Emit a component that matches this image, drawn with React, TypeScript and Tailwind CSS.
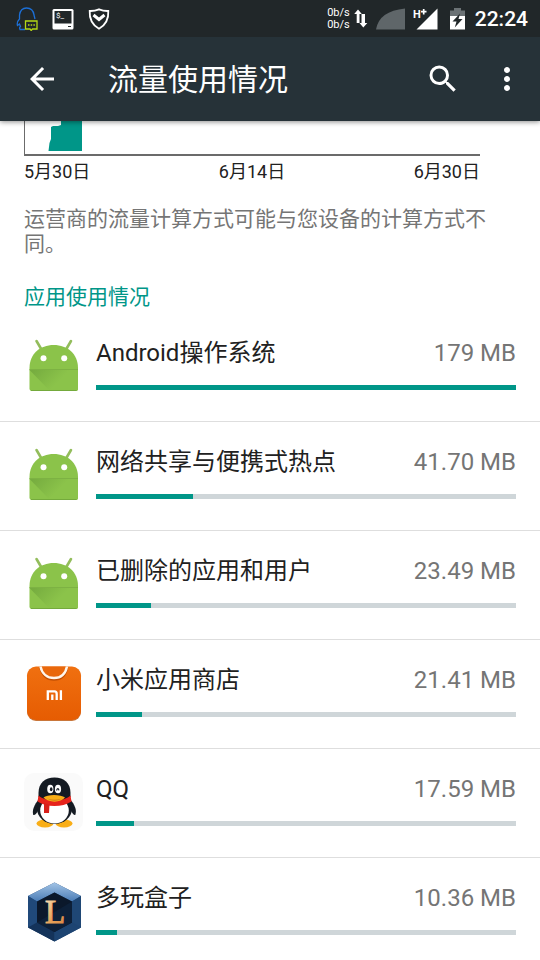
import { MdArrowBack, MdMoreVert, MdSearch } from 'react-icons/md'

interface AppUsage {
    name: string
    usage: string
    percent: number
    icon: () => React.JSX.Element
}

function AndroidIcon() {
    return (
        <svg viewBox="0 0 60 60" className="w-15 h-15" aria-hidden="true">
            <defs>
                <linearGradient id="android-shade" x1="0" y1="0" x2="0.7" y2="0.3">
                    <stop offset="0" stopColor="#74aa3e" />
                    <stop offset="1" stopColor="#8bc34a" />
                </linearGradient>
            </defs>
            <path d="M12.500 4 L17.500 12.500 M47 4 L42 12.500" stroke="#93bd5c" strokeWidth="2.600" strokeLinecap="round" />
            <path d="M5.500 33 V31 C5.500 17 16 8 29.700 8 C43.500 8 54 17 54 31 V33 Z" fill="#8bc34a" />
            <path d="M5.500 33 H54 V51.500 Q54 54 51.500 54 H8 Q5.500 54 5.500 51.500 Z" fill="#8bc34a" />
            <path d="M5.500 33 H54 V51.500 Q54 54 51.500 54 H26 Z" fill="url(#android-shade)" />
            <path d="M5.500 32.500 H54" stroke="#7db243" strokeWidth="1" />
            <path d="M7 53.500 H52.500" stroke="#74aa3c" strokeWidth="1" />
            <circle cx="19.500" cy="21.300" r="3" fill="#fff" />
            <circle cx="40.200" cy="21.300" r="3" fill="#fff" />
        </svg>
    )
}

function MiStoreIcon() {
    return (
        <svg viewBox="0 0 60 60" className="w-15 h-15" aria-hidden="true">
            <defs>
                <linearGradient id="mi-bag" x1="0" y1="0" x2="0" y2="1">
                    <stop offset="0" stopColor="#f07010" />
                    <stop offset="1" stopColor="#e65c02" />
                </linearGradient>
            </defs>
            <rect x="3" y="3.500" width="54" height="53.500" rx="9" fill="#c9763a" />
            <rect x="3" y="2.500" width="54" height="53.500" rx="9" fill="url(#mi-bag)" />
            <path d="M16.500 3.500 C18.500 11.500 23.500 15.500 30 15.500 C36.500 15.500 41.500 11.500 43 3.500" fill="none" stroke="#c24f04" strokeWidth="2.600" />
            <path d="M16.500 2.500 C18 10 23.500 14 30 14 C36.500 14 41.500 10 43 2.500" fill="#e9680c" stroke="#fff6ec" strokeWidth="2.400" />
            <path d="M23.800 36 V27.400 H30.500 Q32.700 27.400 32.700 30 V36 M28.300 30.500 V36 M36.900 26.300 V36" fill="none" stroke="#fff" strokeWidth="2.300" />
        </svg>
    )
}

function QQIcon() {
    return (
        <svg viewBox="0 0 60 60" className="w-15 h-15" aria-hidden="true">
            <rect x="0" y="0" width="59" height="58" rx="10" fill="#fafafa" />
            <ellipse cx="21" cy="50.500" rx="8.500" ry="4" fill="#f9ae17" />
            <ellipse cx="40" cy="50.500" rx="8.500" ry="4" fill="#f9ae17" />
            <path d="M15 26 C10 32 8 37 9.200 42 C11 42.500 13 40 15 36 Z" fill="#141a22" />
            <path d="M46 26 C51 32 53 37 51.300 42 C50 42.500 48 40 46 36 Z" fill="#141a22" />
            <ellipse cx="30.500" cy="35.500" rx="17.500" ry="15.500" fill="#141a22" />
            <ellipse cx="30.500" cy="37.500" rx="14.300" ry="13" fill="#fff" />
            <path d="M14.500 24 V20 C14.500 10 21 4.500 30.500 4.500 C40 4.500 46.500 10 46.500 20 V24 C42 30 19 30 14.500 24 Z" fill="#141a22" />
            <path d="M14.500 22.500 C22 29 39 29 46.500 22.500 L47.500 28.500 C38 34.500 23 34.500 13.500 28.500 Z" fill="#e6231c" />
            <path d="M20 30 L25.500 31.500 L25 40 H20 Z" fill="#d8201b" />
            <ellipse cx="26.300" cy="16" rx="3.100" ry="4.300" fill="#fff" />
            <ellipse cx="34" cy="16" rx="3.100" ry="4.300" fill="#fff" />
            <ellipse cx="27.200" cy="16.200" rx="1.300" ry="2" fill="#141a22" />
            <path d="M32.500 17.400 Q34 13.700 35 17.400" fill="none" stroke="#141a22" strokeWidth="1.200" />
            <path d="M19.500 24.500 C23 21 37 21 41 24.500 C37 30 24 30 19.500 24.500 Z" fill="#f9ae17" />
            <path d="M23 25.500 Q30.500 28 38 25.500 Q30.500 30 23 25.500 Z" fill="#c8791a" />
        </svg>
    )
}

function DuowanIcon() {
    return (
        <svg viewBox="0 0 60 60" className="w-15 h-15" aria-hidden="true">
            <defs>
                <linearGradient id="box-top" x1="0" y1="0" x2="0" y2="1">
                    <stop offset="0" stopColor="#a3c4e6" />
                    <stop offset="1" stopColor="#4a7cb6" />
                </linearGradient>
                <linearGradient id="box-letter" x1="0" y1="0" x2="1" y2="1">
                    <stop offset="0" stopColor="#fff0cf" />
                    <stop offset="0.500" stopColor="#e8a45a" />
                    <stop offset="1" stopColor="#d98443" />
                </linearGradient>
            </defs>
            <path d="M30.500 0.500 L57 14 V45.500 L30.500 59.500 L4 45.500 V14 Z" fill="#1f4673" />
            <path d="M4 14 L30.500 0.500 L57 14 L48 19.500 L30.500 10.500 L13 19.500 Z" fill="url(#box-top)" />
            <path d="M57 14 L48 19.500 V40.500 L57 45.500 Z" fill="#1f4775" />
            <path d="M4 14 L13 19.500 V40.500 L4 45.500 Z" fill="#20497a" />
            <path d="M4 45.500 L13 40.500 L30.500 50 V59.500 Z" fill="#14335a" />
            <path d="M57 45.500 L48 40.500 L30.500 50 V59.500 Z" fill="#1d4472" />
            <path d="M30.500 10.500 L48 19.500 V40.500 L30.500 50 L13 40.500 V19.500 Z" fill="#0b182b" />
            <path d="M48 19.500 V40.500 L30.500 50 L13 40.500 Z" fill="#0d2039" />
            <text x="21" y="40.500" fontSize="33" fill="url(#box-letter)" stroke="url(#box-letter)" strokeWidth="1" className="font-['Liberation_Serif',serif]">L</text>
        </svg>
    )
}

const apps: AppUsage[] = [
    { name: 'Android操作系统', usage: '179 MB', percent: 100, icon: AndroidIcon },
    { name: '网络共享与便携式热点', usage: '41.70 MB', percent: 23, icon: AndroidIcon },
    { name: '已删除的应用和用户', usage: '23.49 MB', percent: 13, icon: AndroidIcon },
    { name: '小米应用商店', usage: '21.41 MB', percent: 11, icon: MiStoreIcon },
    { name: 'QQ', usage: '17.59 MB', percent: 9, icon: QQIcon },
    { name: '多玩盒子', usage: '10.36 MB', percent: 5, icon: DuowanIcon },
]

function StatusBar() {
    return (
        <div className="flex items-center justify-between h-[37px] pl-4 pr-3 bg-[#212729] text-white">
            <div className="flex items-center gap-3.5">
                <svg viewBox="0 0 22 24" className="w-[22px] h-6" fill="none" aria-hidden="true">
                    <path d="M9 22.500 H4 Q3 20.500 4.500 19.500 L3.500 17 L1.500 18.500 Q0.500 15 3.500 12 V8 Q4.500 1 10.500 1 Q17 1 18 8 L19 12" stroke="#1c6fd6" strokeWidth="1.300" />
                    <path d="M9.500 14 H21 V22 H16.500 L15.200 23.500 L14 22 H9.500 Z" stroke="#b5d916" strokeWidth="1.300" />
                    <path d="M12 18 H13.500 M14.700 18 H16.200 M17.400 18 H18.900" stroke="#b5d916" strokeWidth="1.500" />
                </svg>
                <svg viewBox="0 0 22 22" className="w-[22px] h-[22px]" aria-hidden="true">
                    <rect x="0.500" y="1" width="21" height="20.500" rx="1.500" fill="#fff" />
                    <rect x="2.500" y="3" width="17" height="12.500" fill="#212729" />
                    <text x="4" y="9.500" fontSize="8" fill="#fff" className="font-['Roboto',sans-serif]">$_</text>
                    <path d="M16 18.500 H19" stroke="#212729" strokeWidth="1" />
                </svg>
                <svg viewBox="0 0 22 22" className="w-[22px] h-[22px]" fill="none" stroke="#fff" aria-hidden="true">
                    <path d="M11 1.300 Q15.500 3.200 20.300 3 Q21 15 11 20.800 Q1 15 1.700 3 Q6.500 3.200 11 1.300 Z" strokeWidth="1.800" />
                    <path d="M5.500 7 L11 11.500 L16.500 7" strokeWidth="3" />
                </svg>
            </div>
            <div className="flex items-center">
                <div className="pt-px text-[11px] leading-3 mr-1">
                    <div>0b/s</div>
                    <div>0b/s</div>
                </div>
                <svg viewBox="0 0 14 20" className="w-3.5 h-5 mr-2" aria-hidden="true">
                    <path d="M4 0.500 L7.800 5 H5.500 V14 H2.700 V5 H0.200 Z M9.300 18.500 L5.500 14 H7.500 V5 H11 V14 H13.300 Z" fill="#fff" />
                </svg>
                <svg viewBox="0 0 29 22" className="w-[29px] h-[22px] mr-2" aria-hidden="true">
                    <path d="M0 21.500 Q3 3 29 0.500 V21.500 Z" fill="#5f6669" />
                </svg>
                <svg viewBox="0 0 25 22" className="w-[25px] h-[22px] mr-3" aria-hidden="true">
                    <path d="M3.500 21.500 L24.500 0.500 V21.500 Z" fill="#fff" />
                    <text x="0" y="9.500" fontSize="11" fontWeight="bold" fill="#fff" className="font-['Roboto',sans-serif]">H</text>
                    <path d="M8 3.700 H13.500 M10.700 1 V6.500" stroke="#fff" strokeWidth="1.700" />
                </svg>
                <svg viewBox="0 0 15 22" className="w-[15px] h-[22px] mr-2.5" aria-hidden="true">
                    <path d="M4 0 H11 V2.500 H15 V8.500 H0 V2.500 H4 Z" fill="#6b7275" />
                    <path d="M0 8 H15 V21.500 H0 Z" fill="#fff" />
                    <path d="M10 5.500 L2.500 13.500 H6.500 L4.800 19.500 L12.500 11 H8.500 Z" fill="#212729" />
                </svg>
                <time className="pt-px text-[21px] leading-6 font-medium">22:24</time>
            </div>
        </div>
    )
}

function UsageChart() {
    return (
        <div className="ml-6 mr-15">
            <div className="h-[35px] border-l-1 border-b-2 border-[#6b6b6b]">
                <svg viewBox="0 0 60 33" className="w-15 h-[33px]" aria-hidden="true">
                    <path d="M23.500 30 L24.500 22 L26 18 V6 L28 5 H33 L36 4 V0 H57 V30 Z" fill="#009688" />
                </svg>
            </div>
            <div className="flex justify-between mt-1 text-[18px] leading-6">
                <span>5月30日</span>
                <span>6月14日</span>
                <span>6月30日</span>
            </div>
        </div>
    )
}

function UsageRow({ app }: { app: AppUsage }) {
    const Icon = app.icon
    return (
        <li className="flex gap-3 px-6 pt-6 pb-[31px] border-b border-[#dedede] last:border-b-0 last:pb-[23px]">
            {/* the icon is taller than the text, so it must not stretch the row */}
            <div className="shrink-0 h-[53px]">
                <Icon />
            </div>
            <div className="flex-1 min-w-0">
                <div className="flex justify-between text-[24px] leading-8">
                    <span className="truncate">{app.name}</span>
                    <span className="shrink-0 text-[#757575]">{app.usage}</span>
                </div>
                <div
                    role="progressbar"
                    aria-label={app.name}
                    aria-valuenow={app.percent}
                    className="h-[5px] mt-4 bg-[#cfd6d9]"
                >
                    <div className="h-full bg-[#009688]" style={{ width: `${app.percent}%` }} />
                </div>
            </div>
        </li>
    )
}

export default function App() {
    return (
        <div className="min-h-screen bg-white text-[#212121] font-['Roboto','Noto_Sans_CJK_SC',sans-serif]" lang="zh-CN">
            <header className="sticky top-0 z-10 shadow-[0_1px_5px_rgba(0,0,0,0.45)]">
                <StatusBar />
                <div className="flex items-center h-[84px] pl-6 pr-[15px] bg-[#263238] text-white">
                    <button aria-label="返回" className="mr-12">
                        <MdArrowBack className="w-9 h-9" />
                    </button>
                    <h1 className="flex-1 pt-0.5 text-[30px] leading-9">流量使用情况</h1>
                    <button aria-label="搜索" className="mr-7">
                        <MdSearch className="w-9 h-9" />
                    </button>
                    <button aria-label="更多选项">
                        <MdMoreVert className="w-9 h-9" />
                    </button>
                </div>
            </header>

            <main>
                <UsageChart />
                <p className="mx-6 mt-[23px] text-[21px] leading-[25px] text-[#757575]">
                    运营商的流量计算方式可能与您设备的计算方式不同。
                </p>
                <h2 className="mx-6 mt-7 mb-[3px] text-[21px] leading-[25px] text-[#009688]">应用使用情况</h2>
                <ul>
                    {apps.map((app) => (
                        <UsageRow key={app.name} app={app} />
                    ))}
                </ul>
            </main>
        </div>
    )
}
